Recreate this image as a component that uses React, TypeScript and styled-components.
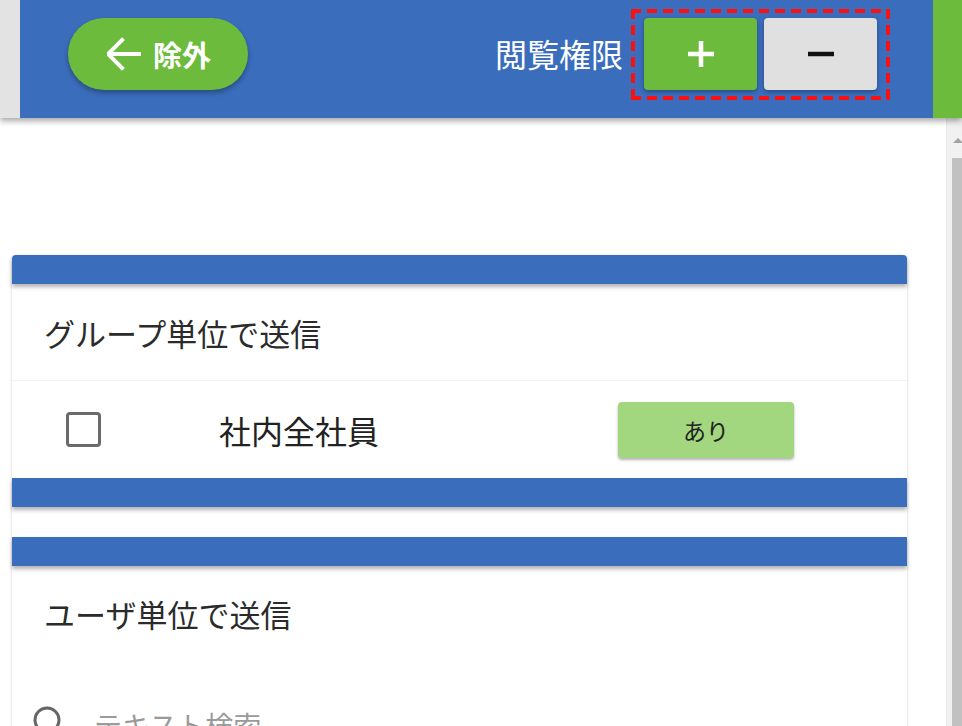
import styled, { createGlobalStyle } from "styled-components";

const GlobalStyle = createGlobalStyle`
  html, body {
    margin: 0;
    padding: 0;
    background: #fff;
    font-family: "Noto Sans CJK JP", "Noto Sans", sans-serif;
    overflow: hidden;
  }
`;

const BLUE = "#3a6dbb";
const GREEN = "#6cbb3c";
const RED = "#ff1010";

const Page = styled.div`
  display: flex;
  flex-direction: column;
  width: 962px;
  height: 726px;
  overflow: hidden;
`;

const Header = styled.header`
  display: flex;
  height: 118px;
  flex-shrink: 0;
  position: relative;
  z-index: 2;
  box-shadow: 0 3px 6px rgba(0, 0, 0, 0.35);
`;

const Strip = styled.div<{ $color: string; $width: number }>`
  width: ${(p) => p.$width}px;
  background: ${(p) => p.$color};
`;

const HeaderBar = styled.div`
  flex: 1;
  display: flex;
  align-items: center;
  background: ${BLUE};
  padding: 0 43px 10px 48px;
`;

const BackButton = styled.button`
  display: flex;
  align-items: center;
  gap: 12px;
  width: 180px;
  height: 72px;
  padding: 0 0 0 39px;
  border: none;
  border-radius: 36px;
  background: ${GREEN};
  color: #fff;
  font-family: inherit;
  font-size: 29px;
  font-weight: 700;
  box-shadow: 0 3px 5px rgba(0, 0, 0, 0.3);
`;

const Spacer = styled.div`
  flex: 1;
`;

const Label = styled.span`
  color: #fff;
  font-size: 32px;
  margin-right: 8px;
  margin-top: -2px;
`;

// dashes drawn with gradients so they come out ~10px long like the reference
const DashedBox = styled.div`
  display: flex;
  gap: 7px;
  padding: 9px 13px 10px 13px;
  background:
    linear-gradient(90deg, ${RED} 62%, transparent 0) top left / 16px 4px repeat-x,
    linear-gradient(90deg, ${RED} 62%, transparent 0) bottom left / 16px 4px repeat-x,
    linear-gradient(180deg, ${RED} 62%, transparent 0) top left / 4px 16px repeat-y,
    linear-gradient(180deg, ${RED} 62%, transparent 0) top right / 4px 16px repeat-y;
`;

const SquareButton = styled.button<{ $bg: string }>`
  display: flex;
  align-items: center;
  justify-content: center;
  width: 113px;
  height: 72px;
  border: none;
  border-radius: 4px;
  background: ${(p) => p.$bg};
  box-shadow: 0 2px 4px rgba(0, 0, 0, 0.3);
  padding: 0;
`;

const Body = styled.div`
  flex: 1;
  display: flex;
  background: #fff;
  min-height: 0;
`;

const Main = styled.main`
  flex: 1;
  padding: 137px 0 0 12px;
`;

const Scrollbar = styled.div`
  width: 15px;
  display: flex;
  flex-direction: column;
  align-items: center;
  background: #f1f1f1;
  border-left: 1px solid #e8e8e8;
`;

const ArrowUp = styled.div`
  margin: 20px 0 0 6px;
  width: 0;
  height: 0;
  border-left: 5px solid transparent;
  border-right: 5px solid transparent;
  border-bottom: 5px solid #a3a3a3;
`;

const Thumb = styled.div`
  margin: 15px 0 0 5px;
  width: 11px;
  flex: 1;
  background: #c1c1c1;
`;

const Panel = styled.section`
  width: 895px;
  background: #fff;
  border-radius: 4px;
  box-shadow: 0 1px 3px rgba(0, 0, 0, 0.2);
  display: flex;
  flex-direction: column;
`;

const BlueBar = styled.div<{ $rounded?: boolean; $gapTop?: number }>`
  height: 29px;
  background: ${BLUE};
  margin-top: ${(p) => p.$gapTop ?? 0}px;
  border-radius: ${(p) => (p.$rounded ? "4px 4px 0 0" : "0")};
  box-shadow: 0 3px 4px rgba(0, 0, 0, 0.3);
  position: relative;
  z-index: 1;
`;

const SectionTitle = styled.div<{ $height: number }>`
  height: ${(p) => p.$height}px;
  display: flex;
  align-items: center;
  padding-left: 32px;
  font-size: 31px;
  color: #2b2b2b;
`;

const Row = styled.div`
  display: grid;
  grid-template-columns: 153px 399px 176px;
  align-items: center;
  height: 97px;
  padding-left: 54px;
  border-top: 1px solid #f2f2f2;
`;

const Checkbox = styled.span`
  width: 35px;
  height: 35px;
  box-sizing: border-box;
  border: 3px solid #6a6a6a;
  border-radius: 4px;
`;

const RowText = styled.span`
  font-size: 32px;
  color: #222;
`;

const TagButton = styled.button`
  width: 176px;
  height: 56px;
  border: none;
  border-radius: 4px;
  background: #a3d77f;
  color: #222;
  font-family: inherit;
  font-size: 23px;
  box-shadow: 0 2px 3px rgba(0, 0, 0, 0.3);
`;

const SearchRow = styled.div`
  display: flex;
  align-items: center;
  gap: 22px;
  height: 60px;
  margin-top: 35px;
  padding-left: 20px;
`;

const SearchText = styled.span`
  font-size: 28px;
  color: #9a9a9a;
`;

const App = () => {
  return (
    <Page>
      <GlobalStyle />
      <Header>
        <Strip $color="#e3e3e3" $width={20} />
        <HeaderBar>
          <BackButton>
            <svg width="34" height="34" viewBox="3.5 3.5 17 17" fill="none" stroke="#fff" strokeWidth="2" strokeLinecap="square">
              <path d="M20 12H5M11 5l-7 7 7 7" />
            </svg>
            除外
          </BackButton>
          <Spacer />
          <Label>閲覧権限</Label>
          <DashedBox>
            <SquareButton $bg={GREEN}>
              <svg width="30" height="30" viewBox="0 0 30 30">
                <path d="M15 2v26M2 15h26" stroke="#fff" strokeWidth="4.5" />
              </svg>
            </SquareButton>
            <SquareButton $bg="#e0e0e0">
              <svg width="30" height="30" viewBox="0 0 30 30">
                <path d="M2 15h26" stroke="#111" strokeWidth="4.5" />
              </svg>
            </SquareButton>
          </DashedBox>
        </HeaderBar>
        <Strip $color={GREEN} $width={29} />
      </Header>
      <Body>
        <Main>
          <Panel>
            <BlueBar $rounded />
            <SectionTitle $height={96}>グループ単位で送信</SectionTitle>
            <Row>
              <Checkbox />
              <RowText>社内全社員</RowText>
              <TagButton>あり</TagButton>
            </Row>
            <BlueBar />
            <BlueBar $gapTop={30} />
            <SectionTitle $height={94}>ユーザ単位で送信</SectionTitle>
            <SearchRow>
              <svg width="40" height="40" viewBox="0 0 40 40" fill="none" stroke="#666" strokeWidth="3">
                <circle cx="15" cy="15" r="12" />
                <path d="M24 24l12 12" />
              </svg>
              <SearchText>テキスト検索</SearchText>
            </SearchRow>
          </Panel>
        </Main>
        <Scrollbar>
          <ArrowUp />
          <Thumb />
        </Scrollbar>
      </Body>
    </Page>
  );
};

export default App;
